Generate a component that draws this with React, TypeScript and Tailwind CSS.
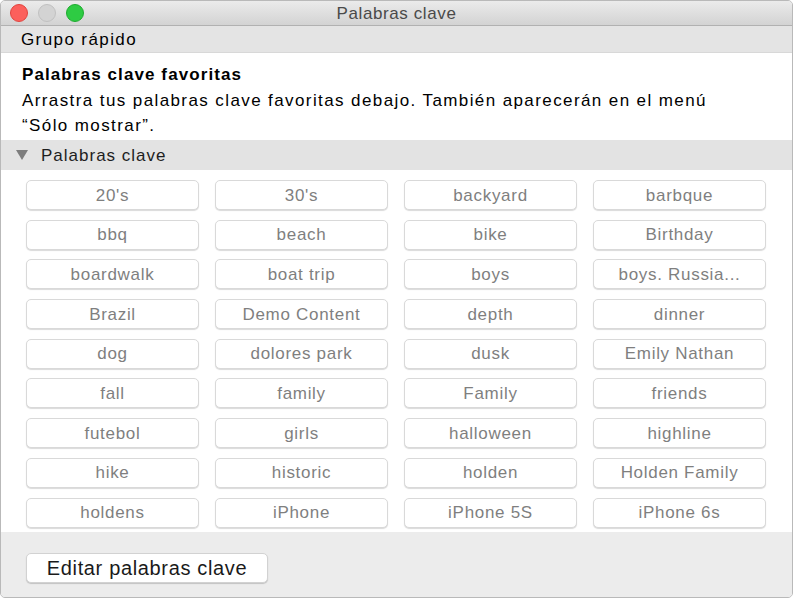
import React from "react";

const rows: string[][] = [
  ["20's", "30's", "backyard", "barbque"],
  ["bbq", "beach", "bike", "Birthday"],
  ["boardwalk", "boat trip", "boys", "boys. Russia..."],
  ["Brazil", "Demo Content", "depth", "dinner"],
  ["dog", "dolores park", "dusk", "Emily Nathan"],
  ["fall", "family", "Family", "friends"],
  ["futebol", "girls", "halloween", "highline"],
  ["hike", "historic", "holden", "Holden Family"],
  ["holdens", "iPhone", "iPhone 5S", "iPhone 6s"],
];

export default function App() {
  return (
    <div
      className="w-[793px] h-[599px] bg-white"
      style={{ fontFamily: '"Liberation Sans", Arial, sans-serif' }}
    >
      <div className="w-[793px] h-[598px] flex flex-col border border-[#b9b9b9] rounded-[5px] overflow-hidden bg-[#ececec]">
        {/* title bar */}
        <div className="relative h-[25px] shrink-0 flex items-center justify-center bg-gradient-to-b from-[#ebebeb] to-[#d3d3d3] border-b border-[#b1b1b1]">
          <div className="absolute left-[9px] top-[3px] flex gap-[10px]">
            <div className="w-[18px] h-[18px] rounded-full bg-[#fc605c] border border-[#e0443e]" />
            <div className="w-[18px] h-[18px] rounded-full bg-[#d3d3d3] border border-[#c0c0c0]" />
            <div className="w-[18px] h-[18px] rounded-full bg-[#2ecb43] border border-[#1eab2f]" />
          </div>
          <span className="text-[17px] tracking-[0.6px] text-[#4a4a4a] leading-none">Palabras clave</span>
        </div>
        {/* Grupo rápido */}
        <div className="h-[27px] shrink-0 flex items-center pl-[20px] bg-[#e4e4e4] border-b border-[#d8d8d8]">
          <span className="text-[17px] tracking-[1.4px] text-black leading-none">Grupo rápido</span>
        </div>
        {/* favorites description */}
        <div className="h-[87px] shrink-0 bg-white pl-[21px] pt-[9px] text-[17px] leading-[25.5px] text-black">
          <div className="font-bold tracking-[1.1px]">Palabras clave favoritas</div>
          <div className="tracking-[1.4px]">Arrastra tus palabras clave favoritas debajo. También aparecerán en el menú</div>
          <div className="tracking-[1.4px]">“Sólo mostrar”.</div>
        </div>
        {/* section header */}
        <div className="h-[30px] shrink-0 flex items-center bg-[#e3e3e3] pl-[15px]">
          <svg width="12" height="11" viewBox="0 0 12 11" className="mr-[13px]">
            <path d="M0 0 L12 0 L6 10 Z" fill="#7d7d7d" />
          </svg>
          <span className="text-[17px] tracking-[1px] text-[#1e1e1e] leading-none">Palabras clave</span>
        </div>
        {/* keyword grid */}
        <div className="shrink-0 bg-white pl-[25px] pr-[26px] pt-[10px] pb-[4px] flex flex-col gap-[9.7px]">
          {rows.map((r, i) => (
            <div key={i} className="grid grid-cols-4 gap-x-[16px]">
              {r.map((k) => (
                <div
                  key={k}
                  className="h-[30px] flex items-center justify-center bg-white rounded-[5px] border border-[#d9d9d9] shadow-[0_1px_1px_rgba(0,0,0,0.15)] text-[17px] tracking-[0.7px] text-[#7f7f7f] leading-none"
                >
                  {k}
                </div>
              ))}
            </div>
          ))}
        </div>
        {/* bottom */}
        <div className="flex-1 bg-[#ececec] pl-[25px] pt-[21px]">
          <div className="w-[242px] h-[30px] flex items-center justify-center bg-white rounded-[5px] border border-[#d2d2d2] shadow-[0_1px_1px_rgba(0,0,0,0.18)] text-[20px] tracking-[0.65px] text-[#1a1a1a] leading-none">
            Editar palabras clave
          </div>
        </div>
      </div>
    </div>
  );
}
